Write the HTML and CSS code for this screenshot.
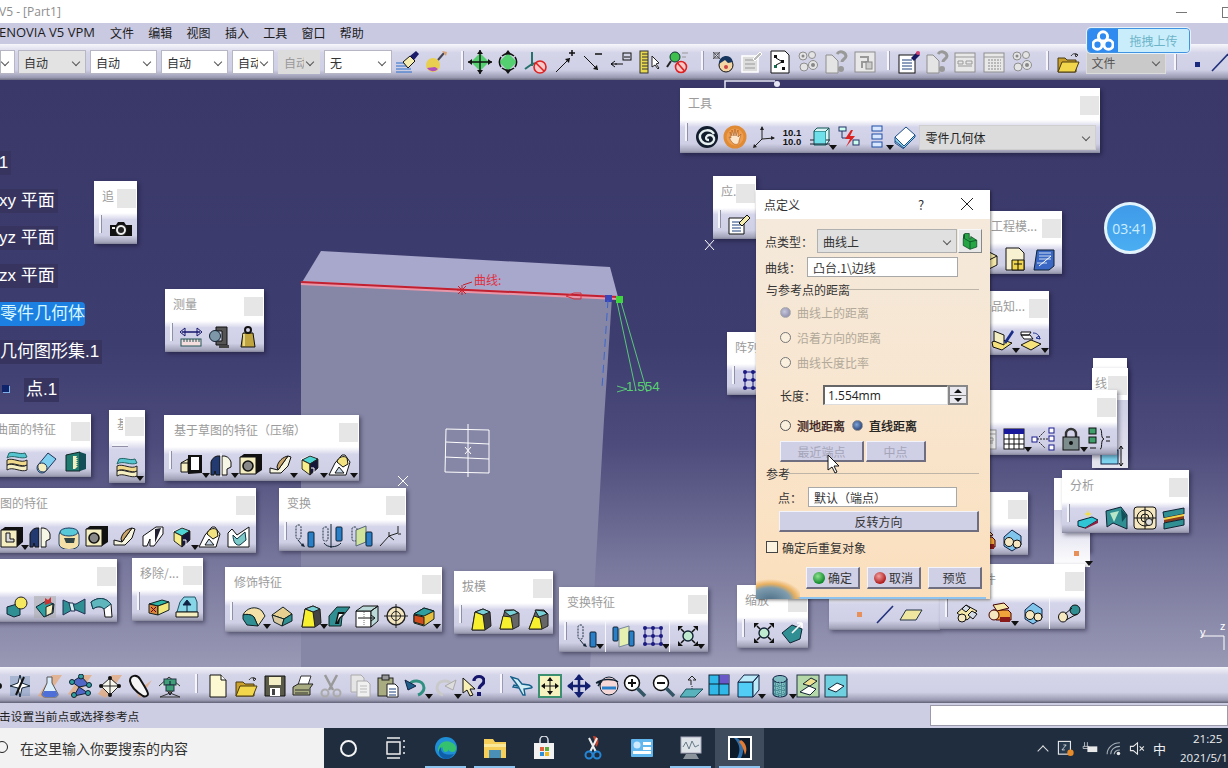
FILE: index.html
```html
<!DOCTYPE html>
<html lang="zh">
<head>
<meta charset="utf-8">
<title>CATIA V5 - [Part1]</title>
<link rel="stylesheet" href="styles.css">
</head>
<body>
<svg class="sprite" xmlns="http://www.w3.org/2000/svg">
<defs>
<symbol id="brush" viewBox="0 0 24 24"><path d="M0 13h13M0 16h14M0 19h15M0 22h16" stroke="#2a6fc9" fill="none"/><path d="M7 12l7-6 5 5-7 7z" fill="#f5ecb0" stroke="#111"/><path d="M14 6l6-5 3 3-5 6z" fill="#1b1b6b"/></symbol>
<symbol id="bulb" viewBox="0 0 24 24"><circle cx="9" cy="15" r="7" fill="#e8cf50"/><path d="M3 18a7 7 0 0 0 11 1l-3-2z" fill="#b050c0"/><path d="M14 10l6-7" stroke="#445" stroke-width="2"/><path d="M18 1l5 1-1 4z" fill="#d9a070"/></symbol>
<symbol id="fit" viewBox="0 0 24 24"><path d="M12 3l9 9-9 9-9-9z" fill="#55d070"/><path d="M12 0v24M0 12h24" stroke="#111" stroke-width="1.4"/><path d="M12 0l-3 4h6zM12 24l-3-4h6zM0 12l4-3v6zM24 12l-4-3v6z" fill="#111"/></symbol>
<symbol id="rot" viewBox="0 0 24 24"><path d="M12 3l9 9-9 9-9-9z" fill="#55d070"/><path d="M6 6a9 9 0 0 1 12 0M18 18a9 9 0 0 1-12 0M5 7a9 9 0 0 0 0 10M19 7a9 9 0 0 1 0 10" stroke="#111" stroke-width="1.5" fill="none"/><path d="M12 0l-3 4h6zM12 24l-3-4h6z" fill="#111"/></symbol>
<symbol id="noaxis" viewBox="0 0 24 24"><path d="M8 2v14M8 14l-7 5M8 14l10-2" stroke="#26726a" stroke-width="2" fill="none"/><circle cx="16" cy="17" r="6" fill="#f7c9c9" stroke="#d22" stroke-width="1.6"/><path d="M12 13l8 8" stroke="#d22" stroke-width="1.6"/></symbol>
<symbol id="arrplus" viewBox="0 0 24 24"><path d="M3 22L17 8" stroke="#111"/><path d="M17 8l-5 1 4 4z" fill="#111"/><path d="M16 3h6M19 0v6" stroke="#111" stroke-width="1.5"/></symbol>
<symbol id="arrminus" viewBox="0 0 24 24"><path d="M3 6l14 14" stroke="#111"/><path d="M17 20l-5-1 4-4z" fill="#111"/><path d="M14 4h7" stroke="#111" stroke-width="1.5"/></symbol>
<symbol id="arrbox" viewBox="0 0 24 24"><path d="M2 14h12M2 14l4-3M2 14l4 3" stroke="#111" fill="none"/><path d="M2 14h2m2 0h2" stroke="#111"/><rect x="14" y="3" width="8" height="7" fill="none" stroke="#111"/><path d="M15 7h6" stroke="#111"/></symbol>
<symbol id="ruler" viewBox="0 0 24 24"><rect x="2" y="1" width="8" height="22" fill="#e9d94c" stroke="#333"/><path d="M4 4h6M4 7h6M4 10h6M4 13h6M4 16h6M4 19h6" stroke="#333"/><path d="M14 6v11l3-2 3 4 1-1-3-4 3-1z" fill="#fff" stroke="#222"/></symbol>
<symbol id="keyno" viewBox="0 0 24 24"><circle cx="9" cy="7" r="5" fill="#3ebf4e" stroke="#133"/><path d="M5 11l-4 6" stroke="#222" stroke-width="2"/><circle cx="15" cy="17" r="5.5" fill="#f7c9c9" stroke="#d22" stroke-width="1.6"/><path d="M11.5 13l7 8" stroke="#d22" stroke-width="1.6"/><path d="M16 3h6M16 7h4" stroke="#999"/></symbol>
<symbol id="head" viewBox="0 0 24 24"><circle cx="15" cy="15" r="7" fill="#f4d7a5" stroke="#111"/><path d="M8 14a7 7 0 0 1 14-2l-5 1-3-3z" fill="#17365f"/><circle cx="15" cy="17" r="2" fill="#c44"/><path d="M2 2l7 7M9 2L2 9" stroke="#555"/><rect x="3" y="3" width="5" height="5" fill="none" stroke="#555"/></symbol>
<symbol id="gdoc" viewBox="0 0 24 24"><path d="M3 6h16v16H3z" fill="#ddd" stroke="#fff" stroke-width="1.5"/><path d="M6 10h10M6 14h10M6 18h10" stroke="#999"/><path d="M14 9l7-7 2 2-7 7z" fill="#bbb" stroke="#fff"/></symbol>
<symbol id="docpen" viewBox="0 0 24 24"><path d="M1 6h15v16H1z" fill="#fff" stroke="#111"/><path d="M4 10h9M4 13h9M4 16h9M4 19h9" stroke="#1c3d7a"/><path d="M11 11l8-8 3 3-8 8z" fill="#f5ecb0" stroke="#111"/></symbol>
<symbol id="flow" viewBox="0 0 24 24"><path d="M3 1h14l4 4v18H3z" fill="#fff" stroke="#111"/><rect x="6" y="5" width="3" height="3" fill="#111"/><rect x="13" y="10" width="3" height="3" fill="#111"/><rect x="6" y="15" width="3" height="3" fill="#1a6b4f"/><rect x="14" y="17" width="3" height="3" fill="#111"/><path d="M8 8l5 3M8 15l6-3" stroke="#111"/></symbol>
<symbol id="ggear" viewBox="0 0 24 24"><g fill="#e4e4e4" stroke="#8e8e8e"><circle cx="7" cy="6" r="4"/><circle cx="16" cy="5" r="3.5"/><circle cx="8" cy="17" r="4"/><circle cx="17" cy="15" r="4.5"/></g><circle cx="7" cy="6" r="1.5" fill="#888"/><circle cx="17" cy="15" r="2" fill="#888"/></symbol>
<symbol id="gcheck" viewBox="0 0 24 24"><path d="M2 5h6l6 6v12H2z" fill="#e4e4e4" stroke="#8e8e8e"/><path d="M13 4a5 5 0 0 1 9 2c0 3-4 3-4 6" fill="none" stroke="#999" stroke-width="3"/><circle cx="17" cy="19" r="3" fill="#999"/></symbol>
<symbol id="gform" viewBox="0 0 24 24"><rect x="2" y="2" width="20" height="20" fill="#e8e8e8" stroke="#8e8e8e"/><path d="M7 7h8v5H9v6" fill="none" stroke="#999" stroke-width="2"/><rect x="13" y="12" width="6" height="7" fill="#ccc" stroke="#888"/></symbol>
<symbol id="gtab" viewBox="0 0 24 24"><rect x="2" y="3" width="20" height="19" fill="#e8e8e8" stroke="#8e8e8e"/><path d="M2 7h20M5 11h5v3H5zM13 11h6v3h-6zM5 16h14" stroke="#999" fill="none"/></symbol>
<symbol id="gdots" viewBox="0 0 24 24"><rect x="2" y="3" width="20" height="19" fill="#e8e8e8" stroke="#8e8e8e"/><path d="M2 7h20" stroke="#999"/><path d="M6 10h13M6 13h13M6 16h13M6 19h13" stroke="#888" stroke-dasharray="2 1"/></symbol>
<symbol id="doclist" viewBox="0 0 24 24"><rect x="2" y="5" width="16" height="18" fill="#fff" stroke="#111"/><path d="M5 10h10M5 13h10M5 16h10M5 19h10" stroke="#1c3d7a"/><path d="M14 8l6-6 3 3-6 6z" fill="#17175f"/><circle cx="21" cy="3" r="2" fill="#d04070"/></symbol>
<symbol id="folder" viewBox="0 0 24 24"><path d="M2 8h7l2 2h9v12H2z" fill="#c9a12c" stroke="#4a3a10"/><path d="M2 22l4-10h17l-4 10z" fill="#f2d64c" stroke="#4a3a10"/><path d="M15 6c2-3 5-3 7-1M22 5l-3-1 1 3z" stroke="#333" fill="none"/></symbol>
<symbol id="spiral" viewBox="0 0 24 24"><circle cx="12" cy="12" r="11" fill="#111c2c"/><path d="M19 9a8 8 0 0 0-14 1c-1 5 3 9 8 9 4 0 7-3 6-6-1-3-5-4-7-2s-1 4 2 4" fill="none" stroke="#e6f0f0" stroke-width="2.4"/></symbol>
<symbol id="hand" viewBox="0 0 24 24"><circle cx="12" cy="12" r="11.5" fill="#e08a33"/><circle cx="12" cy="12" r="8.5" fill="#ed9d4d"/><path d="M11 19c-3-2-4-5-5-7l2 1-1-6 2 4V5l2 6 1-7 1 7 2-6v7l3-3-2 7c0 3-2 4-5 3z" fill="#fbe6cc" stroke="#a9591c" stroke-width=".6"/></symbol>
<symbol id="axes" viewBox="0 0 24 24"><path d="M10 14V2M10 14l12-1M10 14l-8 8" stroke="#222" fill="none"/><path d="M10 1l-2 4h4zM23 13l-4-2v4zM1 23l4-1-3-3z" fill="#222"/></symbol>
<symbol id="cubecy" viewBox="0 0 24 24"><path d="M6 6h12v14H6z" fill="#6fe0ea" stroke="#155"/><path d="M6 6l3-3h12l-3 3M18 6l3-3v13l-3 4" fill="#d7f3f3" stroke="#155"/><path d="M2 15h4M18 15h4M2 19h20" stroke="#223"/></symbol>
<symbol id="bolt" viewBox="0 0 24 24"><rect x="2" y="2" width="7" height="4" fill="#cfe" stroke="#236"/><rect x="16" y="15" width="6" height="5" fill="#cfe" stroke="#236"/><path d="M5 6v7M5 13h11" stroke="#236" fill="none"/><path d="M14 5l-6 9h5l-4 8 9-11h-5l3-6z" fill="#d22"/></symbol>
<symbol id="stack" viewBox="0 0 24 24"><rect x="7" y="1" width="10" height="5" fill="#d8e6ff" stroke="#1f4ea5"/><rect x="7" y="9" width="10" height="5" fill="#d8e6ff" stroke="#1f4ea5"/><rect x="7" y="17" width="10" height="5" fill="#d8e6ff" stroke="#1f4ea5"/></symbol>
<symbol id="book" viewBox="0 0 24 24"><path d="M2 12L13 2l9 8-11 11z" fill="#fff" stroke="#1b4f8a"/><path d="M2 12v4l9 7 11-11v-2L11 21z" fill="#8fd3e8" stroke="#1b4f8a"/><path d="M2 16v2l9 6" stroke="#1b4f8a" fill="none"/></symbol>
<symbol id="camera" viewBox="0 0 24 24"><path d="M1 8h6l2-3h6l2 3h6v11H1z" fill="#111"/><circle cx="12" cy="13" r="5.5" fill="#eee" stroke="#111"/><circle cx="12" cy="13" r="3" fill="#222"/><rect x="3" y="10" width="3" height="2" fill="#eee"/></symbol>
<symbol id="meas" viewBox="0 0 24 24"><path d="M3 7h18" stroke="#16166c" stroke-width="1.5"/><path d="M1 7l5-4v8zM23 7l-5-4v8z" fill="none" stroke="#16166c"/><rect x="2" y="14" width="20" height="7" fill="#f6dede" stroke="#255"/><path d="M5 14v3M8 14v3M11 14v3M14 14v3M17 14v3M20 14v3" stroke="#255"/></symbol>
<symbol id="scope" viewBox="0 0 24 24"><path d="M9 2h11v18H9v-4h6V6H9z" fill="#555" stroke="#111"/><circle cx="8" cy="11" r="5.5" fill="#7d97a8" stroke="#123"/><path d="M12 20h10v3H12z" fill="#444"/></symbol>
<symbol id="weight" viewBox="0 0 24 24"><path d="M7 8h10l2 14H5z" fill="#bfa43f" stroke="#111"/><circle cx="12" cy="5" r="3" fill="none" stroke="#111" stroke-width="2"/><path d="M8 9v12" stroke="#e5d78a" stroke-width="2"/></symbol>
<symbol id="layers" viewBox="0 0 24 24"><path d="M2 15c6-3 14 4 20 0v5c-6 3-14-4-20 0z" fill="#f5eec0" stroke="#222"/><path d="M2 10c6-3 14 4 20 0v5c-6 3-14-4-20 0z" fill="#f0d98a" stroke="#222"/><path d="M2 8c6-4 14 2 20-1l-2-4c-6 2-10-2-16 0z" fill="#55c5cf" stroke="#266"/></symbol>
<symbol id="pill" viewBox="0 0 24 24"><path d="M14 3l8 6-10 12a5 5 0 0 1-8-6z" fill="#7ecff0" stroke="#235"/><path d="M4 15a5 5 0 0 1 8 6c-3 2-9 1-8-6z" fill="#f5eec0" stroke="#235"/></symbol>
<symbol id="studs" viewBox="0 0 24 24"><path d="M2 5l14-3v19H2z" fill="#1f7a70" stroke="#122"/><path d="M16 2l6 2v15l-6 2z" fill="#144f58"/><path d="M9 6h4l-1 2h2l-2 2h2l-2 2h2l-2 2h2l-2 2h2l-3 3H9z" fill="#f5eec0"/></symbol>
<symbol id="pad" viewBox="0 0 24 24"><path d="M8 2h14v18l-14 1z" fill="#111"/><path d="M11 4h8v13h-8z" fill="#fff"/><path d="M1 10l7-4v13H1z" fill="#f5eec0" stroke="#111"/><path d="M1 10h7" stroke="#111"/></symbol>
<symbol id="shaft" viewBox="0 0 24 24"><path d="M2 22V9a8 8 0 0 1 9-6v19H7l-1-4-1 4z" fill="#223a6f" stroke="#111"/><path d="M13 22V3a8 8 0 0 1 9 6v5l-4 2v6z" fill="#f7f7e5" stroke="#111"/><path d="M12 0v24" stroke="#fff"/></symbol>
<symbol id="hole" viewBox="0 0 24 24"><path d="M1 4h16v17H1z" fill="#f5eec0" stroke="#111"/><path d="M1 4l4-3h18l-6 3zM17 4l6-3v16l-6 4z" fill="#111"/><circle cx="9" cy="13" r="5" fill="#888" stroke="#111" stroke-width="1.6"/></symbol>
<symbol id="rib" viewBox="0 0 24 24"><path d="M1 20v-5l8 2 10-14 3 1-3 9-7 7z" fill="#f5f5e0" stroke="#111"/><path d="M8 14c1-6 6-10 11-11l-10 14z" fill="#c9a56a" stroke="#111"/></symbol>
<symbol id="sweep" viewBox="0 0 24 24"><path d="M1 21V11L14 2h7v7L12 21H8V14L5 21z" fill="#fff" stroke="#111"/><path d="M13 4l6-1-6 15z" fill="#223"/></symbol>
<symbol id="multi" viewBox="0 0 24 24"><path d="M12 2l9 4v9l-9 7-9-6V6z" fill="#fff"/><path d="M4 7l8-4 8 3-8 5z" fill="#4fd4d4" stroke="#222"/><path d="M4 7v9l8 6V11z" fill="#f7ee8a" stroke="#222"/><path d="M12 11l8-5v9l-8 7z" fill="#16163a" stroke="#222"/><path d="M13 15h3v5" stroke="#fff" fill="none"/></symbol>
<symbol id="loft" viewBox="0 0 24 24"><path d="M1 22l6-12L14 2h3l5 7-4 13z" fill="#fff" stroke="#111"/><path d="M9 9c1-5 7-7 10-4l1 6-5 3z" fill="#f2e380" stroke="#111"/><path d="M7 20l4-6 5 6z" fill="#c9d9ea" stroke="#111"/></symbol>
<symbol id="pocketS" viewBox="0 0 24 24"><path d="M1 22V8l4-4 5 6 12-8v20z" fill="#fff" stroke="#111"/><path d="M6 10l4 4 8-7 1 8-6 5c-4 1-7-3-7-10z" fill="#7cc9c9" stroke="#134"/></symbol>
<symbol id="groove" viewBox="0 0 24 24"><path d="M2 10a9 6 0 0 1 20 0v9a9 5 0 0 1-20 0z" fill="#f5e1a8" stroke="#246"/><ellipse cx="12" cy="7" rx="9" ry="4" fill="#58c9d9" stroke="#246"/><path d="M7 13h11l-1 5H9z" fill="#344"/></symbol>
<symbol id="lshape" viewBox="0 0 24 24"><path d="M1 5h16v17H1z" fill="#f5eec0" stroke="#111"/><path d="M1 5l4-3h18l-6 3zM17 5l6-3v15l-6 5z" fill="#111"/><path d="M6 8h4v6h4v3H6z" fill="#ddd" stroke="#111"/></symbol>
<symbol id="blob" viewBox="0 0 24 24"><path d="M2 12l10-3 3 4v7l-6 2-7-3z" fill="#2f8f92" stroke="#123"/><circle cx="16" cy="8" r="6" fill="#f5e760" stroke="#222"/></symbol>
<symbol id="house" viewBox="0 0 24 24"><rect x="1" y="1" width="22" height="22" fill="#aaa" opacity=".55"/><path d="M3 12l10-6 8 3-1 9-9 4z" fill="#2f9f9f" stroke="#123"/><path d="M12 3l3 2 3-3v6l-6 2z" fill="#c33"/><path d="M13 12l7-3-1 9-6 3z" fill="#f5eec0" stroke="#222"/></symbol>
<symbol id="bow" viewBox="0 0 24 24"><path d="M1 5l9 4 4 0 9-5v15l-9-4h-4l-9 5z" fill="#2f8f92" stroke="#235"/><path d="M7 8h4l2 8h-4z" fill="#d6f0f0" stroke="#235"/></symbol>
<symbol id="curve3" viewBox="0 0 24 24"><path d="M1 7c7-5 14-5 20 2l1 13h-7l-1-8c-3-3-7-3-11 0z" fill="#fff" stroke="#111"/><path d="M1 7c7-5 14-5 20 2l-7 5c-3-3-7-3-11 0z" fill="#5fb6bd" stroke="#145"/></symbol>
<symbol id="remove" viewBox="0 0 24 24"><path d="M2 10l13-4 7 2-11 4z" fill="#2fb5a5" stroke="#122"/><path d="M2 10l9 2v9l-9-2z" fill="#d9853a" stroke="#122"/><path d="M11 12l11-4v8l-11 5z" fill="#f2e77a" stroke="#122"/><path d="M4 13l5 5M9 13l-5 5" stroke="#600"/></symbol>
<symbol id="up" viewBox="0 0 24 24"><path d="M5 8L9 3h11l2 5v10H2l3-10z" fill="#86d6e8" stroke="#256"/><path d="M12 19V7M12 6l-4 5h8z" fill="#124" stroke="#124"/><path d="M1 18h22v5H1z" fill="#f5eec0" stroke="#111"/></symbol>
<symbol id="tmove" viewBox="0 0 24 24"><rect x="3" y="1" width="5" height="14" rx="2" fill="none" stroke="#234" stroke-dasharray="2 1"/><rect x="15" y="8" width="6" height="15" rx="1" fill="#2a80c8" stroke="#123"/><path d="M5 16l5 6" stroke="#123"/><path d="M12 23l-4-1 2-3z" fill="#123"/></symbol>
<symbol id="trot" viewBox="0 0 24 24"><rect x="2" y="3" width="5" height="14" rx="2" fill="none" stroke="#234" stroke-dasharray="2 1"/><path d="M10 0v24" stroke="#123"/><rect x="15" y="3" width="6" height="14" rx="1" fill="#2a80c8" stroke="#123"/><path d="M3 19c3 5 13 5 17 0" fill="none" stroke="#123"/></symbol>
<symbol id="tsym" viewBox="0 0 24 24"><rect x="2" y="3" width="5" height="14" rx="2" fill="none" stroke="#234" stroke-dasharray="2 1"/><path d="M6 6l10-4v16L6 22z" fill="#cfe39a" stroke="#567"/><rect x="16" y="8" width="6" height="14" rx="1" fill="#2a80c8" stroke="#123"/></symbol>
<symbol id="taxis" viewBox="0 0 24 24"><path d="M11 12l9-3v-7M11 12l-9 10M11 12v-4" stroke="#222" fill="none"/><path d="M20 10h3M11 12l5 4" stroke="#222"/></symbol>
<symbol id="fillet" viewBox="0 0 24 24"><path d="M1 11C4 4 14 1 20 7l3 5-7 10-4-9C9 10 4 10 1 11z" fill="#f5e1a8" stroke="#122"/><path d="M1 11c3-1 8-1 11 2l4 9-11-1-4-6z" fill="#2f8f92" stroke="#122"/></symbol>
<symbol id="chamf" viewBox="0 0 24 24"><path d="M2 11L13 3l9 7-8 5z" fill="#e8d090" stroke="#122"/><path d="M2 11l12 4-2 7-8-4z" fill="#d9c9a0" stroke="#122"/><path d="M14 15l8-5v7l-10 5z" fill="#2f8f92" stroke="#122"/></symbol>
<symbol id="draft" viewBox="0 0 24 24"><path d="M6 5l8-3 7 3 1 14-6 4H3z" fill="#444" stroke="#222"/><path d="M6 5l8-3 7 3-7 3z" fill="#78cfd6" stroke="#222"/><path d="M6 5l8 3 2 15H3z" fill="#f6f02e" stroke="#222"/></symbol>
<symbol id="draft2" viewBox="0 0 24 24"><path d="M8 3h9l5 3v13l-6 3H3z" fill="#666" stroke="#222"/><path d="M7 4l10-1 4 3-8 3z" fill="#78cfd6" stroke="#222"/><path d="M6 9l8 1 2 12H3z" fill="#f6f02e" stroke="#222"/></symbol>
<symbol id="draft3" viewBox="0 0 24 24"><path d="M10 3h8l4 4v12l-6 3H3z" fill="#666" stroke="#222"/><path d="M9 3l9 1 3 3-8 3z" fill="#78cfd6" stroke="#222"/><path d="M8 9l6 2 2 11H3z" fill="#f6f02e" stroke="#222"/></symbol>
<symbol id="shell" viewBox="0 0 24 24"><path d="M2 12l8-9h13l-8 10-1 9H2z" fill="#2f8f92" stroke="#122"/><path d="M8 20l3-12h7l-5 7-1 5z" fill="#111"/><path d="M10 18l2-8h4l-4 4z" fill="#fff"/></symbol>
<symbol id="thick" viewBox="0 0 24 24"><path d="M1 7h15v16H1z" fill="#fff" stroke="#111"/><path d="M1 7l7-5h15l-7 5zM16 7l7-5v15l-7 6z" fill="#bcd9d9" stroke="#111"/><path d="M3 14h16M16 11l4 3-4 3" stroke="#111" fill="none"/><path d="M9 8v14" stroke="#777" stroke-dasharray="1 1"/></symbol>
<symbol id="target" viewBox="0 0 24 24"><circle cx="12" cy="12" r="9" fill="#f5e7c0" stroke="#222" stroke-width="1.4"/><circle cx="12" cy="12" r="4.5" fill="none" stroke="#222"/><path d="M12 0v24M0 12h24" stroke="#222"/></symbol>
<symbol id="boxb" viewBox="0 0 24 24"><path d="M2 10l10-6 10 3v8l-10 7-10-3z" fill="#e8c040" stroke="#122"/><path d="M2 10l10-6 10 3-10 5z" fill="#2f9f9f" stroke="#122"/><path d="M2 11l10 2v8l-10-3z" fill="#d24b1a" stroke="#122"/></symbol>
<symbol id="grid" viewBox="0 0 24 24"><path d="M4 4h16v16H4zM4 12h16M12 4v16" fill="none" stroke="#1a1a80"/><g fill="#1a1a80"><circle cx="4" cy="4" r="2"/><circle cx="12" cy="4" r="2"/><circle cx="20" cy="4" r="2"/><circle cx="4" cy="12" r="2"/><circle cx="12" cy="12" r="2"/><circle cx="20" cy="12" r="2"/><circle cx="4" cy="20" r="2"/><circle cx="12" cy="20" r="2"/><circle cx="20" cy="20" r="2"/></g></symbol>
<symbol id="mirror" viewBox="0 0 24 24"><path d="M7 5l10-3v18L7 23z" fill="#e6f0b0" stroke="#789"/><rect x="1" y="3" width="5" height="14" rx="1" fill="#2a80c8" stroke="#123"/><rect x="17" y="7" width="5" height="15" rx="1" fill="#2a80c8" stroke="#123"/></symbol>
<symbol id="scaleI" viewBox="0 0 24 24"><circle cx="12" cy="12" r="5" fill="#bfeacf" stroke="#123" stroke-width="1.4"/><path d="M5 5l3 3M19 5l-3 3M5 19l3-3M19 19l-3-3" stroke="#111" stroke-width="1.500"/><path d="M2 2h5L2 7zM22 2h-5l5 5zM2 22h5l-5-5zM22 22h-5l5-5z" fill="#111"/></symbol>
<symbol id="scale2" viewBox="0 0 24 24"><path d="M2 12l10-8 10 4-2 10-10 4z" fill="#2f8f92" stroke="#123"/><path d="M12 12L22 2M22 2h-5M22 2v5" stroke="#fff" stroke-width="1.6"/></symbol>
<symbol id="docy" viewBox="0 0 24 24"><path d="M3 1h13l5 5v17H3z" fill="#f7f1d2" stroke="#111"/><path d="M9 13h12v10H9z" fill="#f2d64c" stroke="#111"/><path d="M11 17h8M15 13v10" stroke="#111"/></symbol>
<symbol id="docb" viewBox="0 0 24 24"><path d="M5 3h17v16L17 23H2z" fill="#3a66c4" stroke="#123"/><path d="M7 6h12M7 9h12M7 12h12M5 16h10" stroke="#cde"/><path d="M7 19l12-10" stroke="#fff"/></symbol>
<symbol id="boxc" viewBox="0 0 24 24"><path d="M2 9l10-5 10 5v9l-10 5-10-5z" fill="#f3e6a8" stroke="#111"/><path d="M2 9l10 5 10-5M12 14v9" fill="none" stroke="#111"/></symbol>
<symbol id="know" viewBox="0 0 24 24"><path d="M1 14l8-3 12 4-10 7-9-3z" fill="#f5e27a" stroke="#111"/><path d="M3 13V3l10 4v10z" fill="#f5eec0" stroke="#111"/><path d="M13 14L21 2l2 2-8 12z" fill="#1b2f8a"/></symbol>
<symbol id="know2" viewBox="0 0 24 24"><path d="M2 7h8l2-3H2z M2 7l3 4h9l-3-4z" fill="#fff" stroke="#111"/><path d="M14 5c4 0 6 2 7 6M21 11l-4-1 3-2z" stroke="#1b2f8a" fill="none"/><path d="M2 17l10-5 10 4-10 6z" fill="#f5e27a" stroke="#111"/></symbol>
<symbol id="table" viewBox="0 0 24 24"><rect x="2" y="2" width="20" height="20" fill="#fff" stroke="#111"/><rect x="2" y="2" width="20" height="5" fill="#18189a"/><path d="M2 12h20M2 17h20M7 7v15M12 7v15M17 7v15" stroke="#111"/></symbol>
<symbol id="graph" viewBox="0 0 24 24"><g fill="#fff" stroke="#1a1a90"><rect x="1" y="10" width="5" height="5"/><rect x="18" y="1" width="5" height="5"/><rect x="18" y="9" width="5" height="5"/><rect x="18" y="18" width="5" height="5"/></g><path d="M6 12h12M8 10l6-6M8 15l6 6" stroke="#222" stroke-dasharray="2 1"/></symbol>
<symbol id="lock" viewBox="0 0 24 24"><path d="M7 10V7a5 5 0 0 1 10 0v3" fill="none" stroke="#333" stroke-width="2.4"/><rect x="4" y="10" width="16" height="13" fill="#7d8d8d" stroke="#111"/><circle cx="12" cy="16" r="2" fill="#111"/></symbol>
<symbol id="rules" viewBox="0 0 24 24"><rect x="2" y="1" width="7" height="6" fill="#3e9f6a" stroke="#111"/><rect x="2" y="10" width="7" height="6" fill="#3e9f6a" stroke="#111"/><path d="M3 21h6M13 2c3 0 0 9 4 10-4 1-1 10-4 10M19 10h4M19 14h4" stroke="#111" fill="none"/></symbol>
<symbol id="an1" viewBox="0 0 24 24"><path d="M2 15l14-4 6 3-13 8-7-2z" fill="#2fc5d5" stroke="#123"/><path d="M9 22l13-8v3L9 23z" fill="#8d2040"/><path d="M12 4l1 3 3 1-3 1-1 3-1-3-3-1 3-1z" fill="#f2df45"/></symbol>
<symbol id="an2" viewBox="0 0 24 24"><path d="M1 5l15-4 6 8v14L8 17 2 21z" fill="#2f8f92" stroke="#123"/><path d="M5 7l9-2-5 11z" fill="#b8e6c8"/><path d="M16 3l6 7-5 6z" fill="#124f58"/></symbol>
<symbol id="an3" viewBox="0 0 24 24"><rect x="1" y="1" width="22" height="22" rx="3" fill="#f5e7c0" stroke="#111"/><circle cx="12" cy="12" r="8" fill="none" stroke="#111"/><circle cx="12" cy="12" r="4" fill="none" stroke="#111"/><path d="M12 1v22M1 12h22" stroke="#111"/><circle cx="16" cy="16" r="3.5" fill="#ddd" stroke="#111"/></symbol>
<symbol id="an4" viewBox="0 0 24 24"><path d="M1 6l21-4v6L2 12z" fill="#2f8f92" stroke="#123"/><path d="M2 12l20-4v5L2 17z" fill="#8a3b1a"/><path d="M2 12l20-4v2L2 14z" fill="#f2d64c"/><path d="M2 17l20-4v6L2 23z" fill="#2f8f92" stroke="#123"/></symbol>
<symbol id="asm1" viewBox="0 0 24 24"><path d="M2 12l9-8 11 6-10 9z" fill="#f5e7a8" stroke="#111"/><path d="M7 8l4-4 4 3-4 4zM13 14l4-4 5 3-4 5z" fill="#d3dbe8" stroke="#111"/><circle cx="7" cy="17" r="4" fill="#f5e7c0" stroke="#111"/></symbol>
<symbol id="asm2" viewBox="0 0 24 24"><path d="M5 9h15l3 3v7H8z" fill="#f0a33a" stroke="#400"/><path d="M5 4l11-2 5 5-12 3z" fill="#f5e7a8" stroke="#400"/><circle cx="6" cy="14" r="5" fill="#f5e7c0" stroke="#400"/><path d="M12 16h10v5H12z" fill="#8a1a1a"/></symbol>
<symbol id="asm3" viewBox="0 0 24 24"><path d="M4 9l8-7 9 6v9l-9 6-8-5z" fill="#7fc5ec" stroke="#124"/><circle cx="9" cy="14" r="4.5" fill="#f5e7c0" stroke="#111"/><circle cx="17" cy="16" r="4" fill="#f5e7c0" stroke="#111"/></symbol>
<symbol id="asm4" viewBox="0 0 24 24"><ellipse cx="6" cy="16" rx="4.5" ry="5" fill="#f5e7c0" stroke="#111"/><ellipse cx="18" cy="9" rx="5" ry="5" fill="#2f8f92" stroke="#111"/><path d="M8 13l7-6M9 19l11-6" stroke="#111"/></symbol>
<symbol id="point" viewBox="0 0 24 24"><rect x="10" y="10" width="5" height="5" fill="#e8905a"/></symbol>
<symbol id="line" viewBox="0 0 24 24"><path d="M4 21L20 4" stroke="#20307a" stroke-width="1.6"/></symbol>
<symbol id="plane" viewBox="0 0 24 24"><path d="M7 8h16L17 18H1z" fill="#efe6a0" stroke="#234"/></symbol>
<symbol id="star" viewBox="0 0 24 24"><rect x="2" y="2" width="20" height="20" fill="#5a7fa8" opacity=".35"/><path d="M12 1l2 8 8 3-8 2-2 9-2-9-8-2 8-3z" fill="#fff" stroke="#123"/><path d="M16 3l-8 18" stroke="#111" stroke-width="2"/></symbol>
<symbol id="flask" viewBox="0 0 24 24"><path d="M0 22L14 1h10L8 24z" fill="#e4a878" opacity=".75"/><path d="M9 3h5v6l6 11c0 2-1 3-3 3H7c-2 0-3-1-3-3l5-11z" fill="#dbeefc" stroke="#555"/><path d="M6 17h12l2 4-3 2H7l-3-2z" fill="#4f6fd8"/></symbol>
<symbol id="net" viewBox="0 0 24 24"><path d="M0 20L14 1h10L8 24z" fill="#e4a878" opacity=".75"/><path d="M4 8l9-6 8 9-10 2zM11 13l-5 9 14-3z" fill="#5067c8" stroke="#123"/><g fill="#2f9f9f" stroke="#123"><circle cx="13" cy="2.500" r="2.500"/><circle cx="4" cy="8" r="2.500"/><circle cx="21" cy="11" r="2.500"/><circle cx="6" cy="21" r="2.500"/><circle cx="20" cy="19" r="2.500"/></g></symbol>
<symbol id="net2" viewBox="0 0 24 24"><path d="M0 20L14 1h10L8 24z" fill="#e4a878" opacity=".75"/><path d="M3 12l9-8 9 8-9 9zM3 12h18M12 4v17" fill="#f7f7ee" stroke="#222"/><g fill="#111"><circle cx="12" cy="4" r="2"/><circle cx="3" cy="12" r="2"/><circle cx="21" cy="12" r="2"/><circle cx="12" cy="21" r="2"/></g></symbol>
<symbol id="cone" viewBox="0 0 24 24"><path d="M24 6L12 24 8 18z" fill="#e4a878" opacity=".75"/><path d="M2 7C2 1 9 0 12 5c3 5 8 12 8 15 0 2-3 3-5 2C10 19 3 13 2 7z" fill="#f5f5f5" stroke="#111" stroke-width="2"/></symbol>
<symbol id="rocket" viewBox="0 0 24 24"><path d="M1 12l10-9 11 9" fill="#d5e9de" stroke="#333"/><rect x="6" y="5" width="12" height="6" fill="#3e9f78" stroke="#234"/><path d="M12 7v14M12 21l-3-5h6z" stroke="#113" fill="#d9d25a"/><rect x="8" y="11" width="8" height="6" fill="#3e9f78" stroke="#234"/><path d="M2 23l10-4 10 4z" fill="none" stroke="#333"/></symbol>
<symbol id="new" viewBox="0 0 24 24"><path d="M4 1h11l5 5v17H4z" fill="#fbf8d2" stroke="#111"/><path d="M15 1v5h5" fill="#fff" stroke="#111"/></symbol>
<symbol id="save" viewBox="0 0 24 24"><path d="M2 2h20v20H2z" fill="#5a5a4a" stroke="#111"/><rect x="6" y="3" width="12" height="8" fill="#f5efc5"/><rect x="7" y="14" width="10" height="8" fill="#fff"/><rect x="9" y="15" width="3" height="6" fill="#444"/></symbol>
<symbol id="print" viewBox="0 0 24 24"><path d="M7 11l3-9h10l-3 9z" fill="#fff" stroke="#333"/><path d="M2 13l5-3h15l-3 4v7H2z" fill="#a8ac80" stroke="#222"/><path d="M4 16h14M4 19h13" stroke="#333"/></symbol>
<symbol id="cut" viewBox="0 0 24 24"><path d="M6 1l8 15M18 1l-8 15" stroke="#999" stroke-width="2.500" fill="none"/><circle cx="6" cy="19" r="3.500" fill="none" stroke="#aaa" stroke-width="2"/><circle cx="18" cy="19" r="3.500" fill="none" stroke="#aaa" stroke-width="2"/></symbol>
<symbol id="copy" viewBox="0 0 24 24"><path d="M3 1h10l3 3v14H3z" fill="#e5e5e5" stroke="#aaa"/><path d="M9 7h10l3 3v13H9z" fill="#f0f0f0" stroke="#aaa"/><path d="M12 12h7M12 15h7M12 18h7" stroke="#bbb"/></symbol>
<symbol id="paste" viewBox="0 0 24 24"><rect x="2" y="4" width="15" height="18" fill="#a8ac80" stroke="#222"/><rect x="6" y="1" width="7" height="5" fill="#999" stroke="#222"/><path d="M11 10h8l3 3v10H11z" fill="#fff" stroke="#222"/><path d="M13 15h7M13 18h7M13 21h7" stroke="#1c3d7a"/></symbol>
<symbol id="undo" viewBox="0 0 24 24"><path d="M5 12c1-7 15-7 15 2 0 3-3 6-6 7" fill="none" stroke="#2f8f80" stroke-width="3"/><path d="M1 6l3 10 8-4z" fill="#1f5f8a" stroke="#124"/></symbol>
<symbol id="redo" viewBox="0 0 24 24"><path d="M19 12C18 5 4 5 4 14c0 3 3 6 6 7" fill="none" stroke="#c9c9c9" stroke-width="3"/><path d="M23 6l-3 10-8-4z" fill="#ddd" stroke="#aaa"/></symbol>
<symbol id="helpq" viewBox="0 0 24 24"><path d="M2 4v15l4-3 3 6 3-1-3-6h5z" fill="#f7efb3" stroke="#111"/><path d="M13 7c0-6 10-6 10 0 0 4-5 4-5 8" fill="none" stroke="#16166c" stroke-width="3.200"/><rect x="16" y="18" width="4" height="4" fill="#16166c"/></symbol>
<symbol id="fly" viewBox="0 0 24 24"><path d="M1 3l7 2 4 5 7 1c3 1 4 3 2 3l-7 1 1 6h-2l-4-7-6-1 1-2 4 1-3-4z" fill="#d2eef5" stroke="#145f8a" stroke-width="1.400"/></symbol>
<symbol id="fitbox" viewBox="0 0 24 24"><rect x="1" y="1" width="22" height="22" fill="#f6f3c0" stroke="#3c8f70" stroke-width="2"/><path d="M12 4v16M4 12h16" stroke="#111"/><path d="M12 3l-3 4h6zM12 21l-3-4h6zM3 12l4-3v6zM21 12l-4-3v6z" fill="#111"/></symbol>
<symbol id="panb" viewBox="0 0 24 24"><path d="M12 1v22M1 12h22" stroke="#13206f" stroke-width="2.500"/><path d="M12 0l-5 6h10zM12 24l-5-6h10zM0 12l6-5v10zM24 12l-6-5v10z" fill="#13206f"/></symbol>
<symbol id="rothead" viewBox="0 0 24 24"><circle cx="14" cy="12" r="9" fill="#f7d8d8" stroke="#123"/><path d="M1 9c5-4 17-5 22-1M1 9l5-1-3 4" fill="none" stroke="#123" stroke-width="1.500"/><path d="M7 14h14" stroke="#2a80c8" stroke-width="3"/></symbol>
<symbol id="zin" viewBox="0 0 24 24"><circle cx="9" cy="9" r="7.500" fill="#fff" stroke="#111" stroke-width="1.500"/><path d="M5 9h8M9 5v8" stroke="#111" stroke-width="2"/><path d="M14 14l8 8" stroke="#356" stroke-width="3.500"/></symbol>
<symbol id="zout" viewBox="0 0 24 24"><circle cx="9" cy="9" r="7.500" fill="#fff" stroke="#111" stroke-width="1.500"/><path d="M5 9h8" stroke="#111" stroke-width="2"/><path d="M14 14l8 8" stroke="#356" stroke-width="3.500"/></symbol>
<symbol id="normal" viewBox="0 0 24 24"><path d="M12 2l-4 4h3v5M12 2l4 4h-3" fill="none" stroke="#222"/><path d="M12 12v3" stroke="#222" stroke-dasharray="1 1"/><path d="M6 15h17l-8 8H0z" fill="#58b3bd" stroke="#1b4f5a"/></symbol>
<symbol id="views" viewBox="0 0 24 24"><rect x="1" y="1" width="20" height="20" fill="#2fb8e8" stroke="#123"/><rect x="11" y="1" width="10" height="9" fill="#6a58c8"/><path d="M11 1v20M1 10h20" stroke="#123"/></symbol>
<symbol id="cube" viewBox="0 0 24 24"><path d="M2 8h15v15H2z" fill="#52cdf5" stroke="#124"/><path d="M2 8l6-7h15l-6 7zM17 8l6-7v15l-6 7z" fill="#bdeaf8" stroke="#124"/></symbol>
<symbol id="cyl" viewBox="0 0 24 24"><path d="M5 5v15c0 4 14 4 14 0V5z" fill="#4f8f98" stroke="#124"/><ellipse cx="12" cy="5" rx="7" ry="3.500" fill="#7fbcc2" stroke="#124"/><path d="M6 10h12M6 14h12M6 18h12M9 7v15M12 8v15M15 7v15" stroke="#9fdfe0" stroke-dasharray="1 1"/></symbol>
<symbol id="sh1" viewBox="0 0 24 24"><rect x="1" y="1" width="22" height="22" fill="#b5d8a8" stroke="#234"/><path d="M4 18l9-6 7 3-6 6z" fill="#fff" stroke="#123"/><path d="M7 10l8-6 6 3-7 5z" fill="#efe090" stroke="#123"/></symbol>
<symbol id="sh2" viewBox="0 0 24 24"><rect x="1" y="1" width="22" height="22" fill="#6fd0e0" stroke="#234"/><path d="M4 15l9-6 7 3-8 6z" fill="#fff" stroke="#123"/></symbol>
<symbol id="ptg" viewBox="0 0 24 24"><path d="M4 12h14M4 12l3-3M4 12l3 3" stroke="#333" fill="none"/><circle cx="20" cy="12" r="3" fill="#111"/></symbol>
<symbol id="flatcy" viewBox="0 0 24 24"><rect x="1" y="6" width="17" height="14" fill="#7ed4ee" stroke="#124"/><path d="M21 2v20M19 5l2-3 2 3M19 19l2 3 2-3" stroke="#111" fill="none"/></symbol>
<symbol id="edge" viewBox="0 0 24 24"><circle cx="12" cy="12" r="11" fill="#1f8ed6"/><path d="M4 16C3 7 13 1 21 9c2 3 1 7-2 7-3 0-4-1-5-3 1 2-1 3-3 3-3-1-2-6-3-5z" fill="#35c26e"/><path d="M11 23C5 21 3 15 7 11c-1 6 5 9 13 7-2 3-5 5-9 5z" fill="#0f5fa8"/></symbol>
<symbol id="explorer" viewBox="0 0 24 24"><path d="M1 3h9l2 3h11v16H1z" fill="#f6cf5a"/><rect x="1" y="8" width="22" height="3" fill="#f9e79a"/><rect x="6" y="14" width="12" height="8" fill="#4a8fb8"/></symbol>
<symbol id="store" viewBox="0 0 24 24"><path d="M8 7V4a4 4 0 0 1 8 0v3" fill="none" stroke="#d8dde4" stroke-width="1.500"/><rect x="2" y="7" width="20" height="16" fill="#f2f2f2"/><rect x="8" y="11" width="4" height="4" fill="#e5613d"/><rect x="13" y="11" width="4" height="4" fill="#5fae3c"/><rect x="8" y="16" width="4" height="4" fill="#2d8fd8"/><rect x="13" y="16" width="4" height="4" fill="#f0ba1c"/></symbol>
<symbol id="sciss" viewBox="0 0 24 24"><path d="M12 0c6 0 7 7 3 11" fill="#c2412c"/><path d="M8 2l7 14M16 2L9 16" stroke="#eee" stroke-width="2"/><circle cx="8" cy="19" r="3.500" fill="none" stroke="#2486d6" stroke-width="2"/><circle cx="16" cy="19" r="3.500" fill="none" stroke="#2486d6" stroke-width="2"/></symbol>
<symbol id="appb" viewBox="0 0 24 24"><rect x="1" y="3" width="22" height="18" rx="1" fill="#62b7ef"/><circle cx="7" cy="9" r="3.500" fill="#cdeaff"/><rect x="13" y="6" width="8" height="3" fill="#fff"/><rect x="13" y="11" width="8" height="3" fill="#fff"/><rect x="3" y="15" width="18" height="3" fill="#fff"/></symbol>
<symbol id="monitor" viewBox="0 0 24 24"><rect x="2" y="1" width="20" height="16" fill="#dde3e8" stroke="#aab"/><path d="M4 11l3-5 3 7 3-8 3 6 4-2" fill="none" stroke="#6a7a8a"/><path d="M7 18h10l3 5H4z" fill="#8b949c"/></symbol>
<symbol id="catia" viewBox="0 0 24 24"><rect x="0" y="0" width="24" height="24" fill="#fff"/><rect x="2" y="2" width="20" height="20" fill="#0d1a2a"/><path d="M9 2c7 4 8 12 4 20h-4c4-7 3-14-3-20z" fill="#2f6ea8"/><path d="M13 4c5 3 7 9 4 15-1-5-3-10-6-13z" fill="#e27b33"/></symbol>
<symbol id="tlogo" viewBox="0 0 24 24"><circle cx="12" cy="7" r="5" fill="none" stroke="#fff" stroke-width="3.200"/><circle cx="6" cy="16" r="5" fill="none" stroke="#fff" stroke-width="3.200"/><circle cx="18" cy="16" r="5" fill="none" stroke="#fff" stroke-width="3.200"/></symbol>
<symbol id="trayshot" viewBox="0 0 24 24"><rect x="2" y="2" width="17" height="18" fill="#26384c" stroke="#e5e5e5" stroke-width="1.600"/><path d="M7 14l6-7M13 7h-4M7 14h4" stroke="#fff"/><circle cx="19" cy="18" r="4.500" fill="#e88b2a"/></symbol>
<symbol id="traypow" viewBox="0 0 24 24"><path d="M5 3v6M9 3v6M3 9h8v3H3z" stroke="#e8e8e8" fill="none"/><rect x="9" y="9" width="14" height="8" fill="#e8e8e8"/></symbol>
<symbol id="traywifi" viewBox="0 0 24 24"><path d="M3 20C3 11 11 4 21 4M8 20c0-6 5-11 13-11M13 20c0-3 3-6 8-6" fill="none" stroke="#a8b0b8" stroke-width="1.500"/><circle cx="19" cy="19" r="2.500" fill="#e8e8e8"/></symbol>
<symbol id="traysnd" viewBox="0 0 24 24"><path d="M2 9h4l6-5v16l-6-5H2z" fill="none" stroke="#e8e8e8" stroke-width="1.500"/><path d="M15 9l6 6M21 9l-6 6" stroke="#e8e8e8" stroke-width="1.500"/></symbol>
<symbol id="taskv" viewBox="0 0 24 24"><rect x="4" y="6" width="13" height="12" fill="none" stroke="#eee" stroke-width="1.500"/><path d="M4 2h13M4 22h13M20 5h2M20 11h2M20 17h2" stroke="#eee" stroke-width="1.500"/></symbol>
<symbol id="okg" viewBox="0 0 24 24"><path d="M5 2h6v7h2V6l8 5v9l-9 3-9-5V9z" fill="#26a545" stroke="#0a4a20"/><path d="M5 9l7 4 9-2M12 13v10" fill="none" stroke="#0a4a20"/><path d="M4 9V3" stroke="#0a4a20" stroke-width="2"/></symbol>
<symbol id="cursor" viewBox="0 0 14 20"><path d="M1 1v15l4-3 3 6 2-1-3-6h5z" fill="#fff" stroke="#111"/></symbol>
</defs>
</svg>

<div class="titlebar">
  <span class="title-text">V5 - [Part1]</span>
  <span class="win-btn win-min"></span>
  <span class="win-btn win-max"></span>
</div>
<div class="menubar">
  <span class="menu-item brand">ENOVIA V5 VPM</span>
  <span class="menu-item">文件</span>
  <span class="menu-item">编辑</span>
  <span class="menu-item">视图</span>
  <span class="menu-item">插入</span>
  <span class="menu-item">工具</span>
  <span class="menu-item">窗口</span>
  <span class="menu-item">帮助</span>
</div>
<div class="topbar">
  <span class="combo w-first"><b></b></span>
  <span class="combo w68 grey">自动<b></b></span>
  <span class="combo w68">自动<b></b></span>
  <span class="combo w68">自动<b></b></span>
  <span class="combo w44"><span class="cut">自动</span><b></b></span>
  <span class="combo w44 off"><span class="cut">自动</span><b></b></span>
  <span class="combo w68 none">无<b></b></span>
  <span class="tool first"><svg class="ic"><use href="#brush"/></svg></span>
  <span class="tool"><svg class="ic"><use href="#bulb"/></svg></span>
  <span class="sep s11"></span>
  <span class="tool"><svg class="ic"><use href="#fit"/></svg></span>
  <span class="tool"><svg class="ic"><use href="#rot"/></svg></span>
  <span class="tool"><svg class="ic"><use href="#noaxis"/></svg></span>
  <span class="tool"><svg class="ic"><use href="#arrplus"/></svg></span>
  <span class="tool"><svg class="ic"><use href="#arrminus"/></svg></span>
  <span class="tool"><svg class="ic"><use href="#arrbox"/></svg></span>
  <span class="tool"><svg class="ic"><use href="#ruler"/></svg></span>
  <span class="tool"><svg class="ic"><use href="#keyno"/></svg></span>
  <span class="sep s9"></span>
  <span class="tool"><svg class="ic"><use href="#head"/></svg></span>
  <span class="tool"><svg class="ic"><use href="#gdoc"/></svg></span>
  <span class="tool"><svg class="ic"><use href="#flow"/></svg></span>
  <span class="tool"><svg class="ic"><use href="#ggear"/></svg></span>
  <span class="tool"><svg class="ic"><use href="#gcheck"/></svg></span>
  <span class="tool"><svg class="ic"><use href="#gform"/></svg></span>
  <span class="sep s8"></span>
  <span class="tool"><svg class="ic"><use href="#doclist"/></svg></span>
  <span class="tool"><svg class="ic"><use href="#gcheck"/></svg></span>
  <span class="tool"><svg class="ic"><use href="#gtab"/></svg></span>
  <span class="tool"><svg class="ic"><use href="#gdots"/></svg></span>
  <span class="tool"><svg class="ic"><use href="#ggear"/></svg></span>
  <span class="sep s10"></span>
  <span class="tool"><svg class="ic"><use href="#folder"/></svg></span>
  <span class="combo w80 off flat">文件<b></b></span>
  <span class="sep s8"></span>
  <span class="dot"></span>
  <span class="tool-curve"><svg class="ic"><use href="#line"/></svg></span>
</div>

<main class="viewport"></main>

<div class="bottombar">
  <span class="tool lead"><svg class="ic"><use href="#ptg"/></svg></span>
  <span class="tool w30"><svg class="ic"><use href="#star"/></svg></span>
  <span class="tool w30"><svg class="ic"><use href="#flask"/></svg></span>
  <span class="tool w30"><svg class="ic"><use href="#net"/></svg></span>
  <span class="tool w30"><svg class="ic"><use href="#net2"/></svg></span>
  <span class="tool w30"><svg class="ic"><use href="#cone"/></svg></span>
  <span class="tool w30"><svg class="ic"><use href="#rocket"/></svg></span>
  <span class="sep s10b"></span>
  <span class="tool"><svg class="ic"><use href="#new"/></svg></span>
  <span class="tool"><svg class="ic"><use href="#folder"/></svg></span>
  <span class="tool"><svg class="ic"><use href="#save"/></svg></span>
  <span class="tool"><svg class="ic"><use href="#print"/></svg></span>
  <span class="tool"><svg class="ic"><use href="#cut"/></svg></span>
  <span class="tool"><svg class="ic"><use href="#copy"/></svg></span>
  <span class="tool"><svg class="ic"><use href="#paste"/></svg></span>
  <span class="tool drop"><svg class="ic"><use href="#undo"/></svg></span>
  <span class="tool drop"><svg class="ic"><use href="#redo"/></svg></span>
  <span class="tool"><svg class="ic"><use href="#helpq"/></svg></span>
  <span class="sep s12"></span>
  <span class="tool"><svg class="ic"><use href="#fly"/></svg></span>
  <span class="tool"><svg class="ic"><use href="#fitbox"/></svg></span>
  <span class="tool"><svg class="ic"><use href="#panb"/></svg></span>
  <span class="tool"><svg class="ic"><use href="#rothead"/></svg></span>
  <span class="tool"><svg class="ic"><use href="#zin"/></svg></span>
  <span class="tool"><svg class="ic"><use href="#zout"/></svg></span>
  <span class="tool"><svg class="ic"><use href="#normal"/></svg></span>
  <span class="tool"><svg class="ic"><use href="#views"/></svg></span>
  <span class="tool drop"><svg class="ic"><use href="#cube"/></svg></span>
  <span class="tool drop bump"><svg class="ic"><use href="#cyl"/></svg></span>
  <span class="tool"><svg class="ic"><use href="#sh1"/></svg></span>
  <span class="tool"><svg class="ic"><use href="#sh2"/></svg></span>
</div>
<div class="statusbar">
  <span class="status-text">击设置当前点或选择参考点</span>
  <span class="status-input"></span>
</div>
<footer class="taskbar">
  <div class="search"><span class="search-ring"></span><span>在这里输入你要搜索的内容</span></div>
  <div class="task-icons">
    <span class="cortana"></span>
    <span class="task tv"><svg class="ic"><use href="#taskv"/></svg></span>
    <span class="task on"><svg class="ic"><use href="#edge"/></svg></span>
    <span class="task on"><svg class="ic"><use href="#explorer"/></svg></span>
    <span class="task"><svg class="ic"><use href="#store"/></svg></span>
    <span class="task"><svg class="ic"><use href="#sciss"/></svg></span>
    <span class="task"><svg class="ic"><use href="#appb"/></svg></span>
    <span class="task on"><svg class="ic"><use href="#monitor"/></svg></span>
    <span class="task on active"><svg class="ic"><use href="#catia"/></svg></span>
  </div>
  <div class="tray">
    <span class="caret"></span>
    <svg class="tray-ic"><use href="#trayshot"/></svg>
    <svg class="tray-ic"><use href="#traypow"/></svg>
    <svg class="tray-ic"><use href="#traywifi"/></svg>
    <svg class="tray-ic"><use href="#traysnd"/></svg>
    <span class="ime">中</span>
    <span class="clock"><span>21:25</span><span>2021/5/1</span></span>
  </div>
</footer>

<div class="canvas">
  <svg class="scene" viewBox="0 0 1228 768">
    <path d="M301 284L321 251 610 267 618 297Z" fill="#a8a7cc"/>
    <path d="M301 284L612 297 604 420 590 667H301Z" fill="#8686a6"/>
    <path d="M301 283L618 298" stroke="#e896a8" stroke-width="4"/>
    <path d="M301 282L618 297" stroke="#c02030" stroke-width="2"/>
    <path d="M458 286l8 8M466 286l-8 8M462 285v10M457 290h10" stroke="#c8202c"/>
    <path d="M463 285l9-3" stroke="#c8202c"/>
    <path d="M566 296l8-3h7v6h-7z" fill="none" stroke="#d8303c"/>
    <rect x="605" y="295" width="7" height="7" fill="#3a46b8"/>
    <rect x="616" y="296" width="7" height="7" fill="#3ed43e"/>
    <path d="M608 300L602 388" stroke="#3a66d0" stroke-dasharray="8 5" fill="none"/>
    <path d="M617 302L636 391M621 302L647 392" stroke="#58c878" fill="none"/>
    <path d="M617 386l10 3-10 3" stroke="#58c878" fill="none"/>
    <text class="scene-green" x="626" y="391">1.554</text>
    <text class="scene-red" x="474" y="285">曲线:</text>
    <path d="M446 429l43 1v43l-44-1zM446 442l43 2M445 457l44 2M468 424v53" stroke="#fff" fill="none"/>
    <path d="M465 447l6 7M471 447l-6 7" stroke="#fff"/>
    <path d="M705 240l9 10M714 240l-9 10M398 476l10 10M408 476l-10 10" stroke="#fff"/>
    <path d="M725 88V81H775" stroke="#e6e6f4" fill="none" stroke-width="1.500"/>
    <circle cx="777" cy="84" r="3" fill="#e6e6f4"/>
    <path d="M1210 636h14M1210 636l-9 0M1224 636v14" stroke="#fff" fill="none"/>
    <text class="scene-axis" x="1200" y="636">y</text>
    <text class="scene-axis" x="1220" y="630">z</text>
  </svg>

  <div class="tree">
    <span class="node n1">t1</span>
    <span class="node n2">xy 平面</span>
    <span class="node n3">yz 平面</span>
    <span class="node n4">zx 平面</span>
    <span class="node n5 sel">零件几何体</span>
    <span class="node n6">几何图形集.1</span>
    <span class="node-bullet"></span>
    <span class="node n7">点.1</span>
  </div>

  <section class="pal p-tools"><div class="ptitle"><span>工具</span><i></i></div><div class="pbar"><u></u>
    <span class="tool"><svg class="ic"><use href="#spiral"/></svg></span>
    <span class="tool"><svg class="ic"><use href="#hand"/></svg></span>
    <span class="tool"><svg class="ic"><use href="#axes"/></svg></span>
    <span class="tool num-ic">10.1<br>10.0</span>
    <span class="tool drop"><svg class="ic"><use href="#cubecy"/></svg></span>
    <span class="tool"><svg class="ic"><use href="#bolt"/></svg></span>
    <span class="tool drop"><svg class="ic"><use href="#stack"/></svg></span>
    <span class="tool"><svg class="ic"><use href="#book"/></svg></span>
    <span class="combo body-combo">零件几何体<b></b></span>
  </div></section>

  <section class="pal p-cam"><div class="ptitle"><span>追</span><i></i></div><div class="pbar"><u></u><span class="tool"><svg class="ic"><use href="#camera"/></svg></span></div></section>
  <section class="pal p-meas"><div class="ptitle"><span>测量</span><i></i></div><div class="pbar"><u></u>
    <span class="tool"><svg class="ic"><use href="#meas"/></svg></span><span class="tool"><svg class="ic"><use href="#scope"/></svg></span><span class="tool"><svg class="ic"><use href="#weight"/></svg></span></div></section>
  <section class="pal p-app"><div class="ptitle"><span>应.</span><i></i></div><div class="pbar"><u></u><span class="tool"><svg class="ic"><use href="#docpen"/></svg></span></div></section>
  <section class="pal p-array"><div class="ptitle"><span>阵列</span></div><div class="pbar"><u></u><span class="tool"><svg class="ic"><use href="#grid"/></svg></span></div></section>

  <section class="pal p-eng"><div class="ptitle"><span>工程模...</span><i></i></div><div class="pbar"><u></u>
    <span class="tool"><svg class="ic"><use href="#boxc"/></svg></span><span class="tool"><svg class="ic"><use href="#docy"/></svg></span><span class="tool"><svg class="ic"><use href="#docb"/></svg></span></div></section>
  <section class="pal p-know"><div class="ptitle"><span>产品知...</span><i></i></div><div class="pbar"><u></u>
    <span class="tool drop"><svg class="ic"><use href="#know"/></svg></span><span class="tool drop"><svg class="ic"><use href="#know2"/></svg></span></div></section>

  <section class="pal p-stack1"><div class="ptitle"></div><div class="pbar"></div></section>
  <section class="pal p-stack2"><div class="ptitle"><span>线</span><i></i></div><div class="pbar stack-foot"><svg class="ic-foot"><use href="#flatcy"/></svg></div></section>
  <section class="pal p-rel"><div class="ptitle"><i></i></div><div class="pbar"><u></u>
    <span class="tool"><svg class="ic"><use href="#gtab"/></svg></span>
    <span class="tool drop"><svg class="ic"><use href="#table"/></svg></span><span class="tool"><svg class="ic"><use href="#graph"/></svg></span><span class="tool drop"><svg class="ic"><use href="#lock"/></svg></span><span class="tool"><svg class="ic"><use href="#rules"/></svg></span></div></section>
  <section class="pal p-asm3"><div class="ptitle"><i></i></div><div class="pbar"><u></u>
    <span class="tool"><svg class="ic"><use href="#asm2"/></svg></span><span class="tool"><svg class="ic"><use href="#asm3"/></svg></span></div></section>
  <section class="pal p-wire"><div class="ptitle"></div><div class="pbar"><span class="tool drop"><svg class="ic"><use href="#point"/></svg></span></div></section>
  <section class="pal p-analysis"><div class="ptitle"><span>分析</span><i></i></div><div class="pbar"><u></u>
    <span class="tool"><svg class="ic"><use href="#an1"/></svg></span><span class="tool"><svg class="ic"><use href="#an2"/></svg></span><span class="tool"><svg class="ic"><use href="#an3"/></svg></span><span class="tool"><svg class="ic"><use href="#an4"/></svg></span></div></section>

  <section class="pal p-surf"><div class="ptitle"><span>曲面的特征</span><i></i></div><div class="pbar"><u></u>
    <span class="tool"><svg class="ic"><use href="#layers"/></svg></span><span class="tool"><svg class="ic"><use href="#pill"/></svg></span><span class="tool"><svg class="ic"><use href="#studs"/></svg></span></div></section>
  <section class="pal p-base"><div class="ptitle"><span>基</span><i></i></div><div class="pbar pbar-h"><s></s><span class="tool drop"><svg class="ic"><use href="#layers"/></svg></span></div></section>
  <section class="pal p-sk2"><div class="ptitle"><span>基于草图的特征（压缩）</span><i></i></div><div class="pbar"><u></u>
    <span class="tool drop"><svg class="ic"><use href="#pad"/></svg></span>
    <span class="tool drop"><svg class="ic"><use href="#shaft"/></svg></span>
    <span class="tool"><svg class="ic"><use href="#hole"/></svg></span>
    <span class="tool drop"><svg class="ic"><use href="#rib"/></svg></span>
    <span class="tool drop"><svg class="ic"><use href="#multi"/></svg></span>
    <span class="tool drop"><svg class="ic"><use href="#loft"/></svg></span></div></section>
  <section class="pal p-sk"><div class="ptitle"><span>图的特征</span><i></i></div><div class="pbar"><u></u>
    <span class="tool drop"><svg class="ic"><use href="#lshape"/></svg></span>
    <span class="tool"><svg class="ic"><use href="#shaft"/></svg></span>
    <span class="tool"><svg class="ic"><use href="#groove"/></svg></span>
    <span class="tool"><svg class="ic"><use href="#hole"/></svg></span>
    <span class="tool"><svg class="ic"><use href="#rib"/></svg></span>
    <span class="tool"><svg class="ic"><use href="#sweep"/></svg></span>
    <span class="tool drop"><svg class="ic"><use href="#multi"/></svg></span>
    <span class="tool"><svg class="ic"><use href="#loft"/></svg></span>
    <span class="tool"><svg class="ic"><use href="#pocketS"/></svg></span></div></section>
  <section class="pal p-trans"><div class="ptitle"><span>变换</span><i></i></div><div class="pbar"><u></u>
    <span class="tool"><svg class="ic"><use href="#tmove"/></svg></span><span class="tool"><svg class="ic"><use href="#trot"/></svg></span><span class="tool"><svg class="ic"><use href="#tsym"/></svg></span><span class="tool"><svg class="ic"><use href="#taxis"/></svg></span></div></section>
  <section class="pal p-adv"><div class="ptitle"><i></i></div><div class="pbar"><u></u>
    <span class="tool"><svg class="ic"><use href="#blob"/></svg></span><span class="tool"><svg class="ic"><use href="#house"/></svg></span><span class="tool"><svg class="ic"><use href="#bow"/></svg></span><span class="tool"><svg class="ic"><use href="#curve3"/></svg></span></div></section>
  <section class="pal p-rem"><div class="ptitle"><span>移除/...</span><i></i></div><div class="pbar"><u></u>
    <span class="tool"><svg class="ic"><use href="#remove"/></svg></span><span class="tool"><svg class="ic"><use href="#up"/></svg></span></div></section>
  <section class="pal p-dress"><div class="ptitle"><span>修饰特征</span><i></i></div><div class="pbar"><u></u>
    <span class="tool drop"><svg class="ic"><use href="#fillet"/></svg></span><span class="tool"><svg class="ic"><use href="#chamf"/></svg></span><span class="tool drop"><svg class="ic"><use href="#draft"/></svg></span><span class="tool"><svg class="ic"><use href="#shell"/></svg></span><span class="tool"><svg class="ic"><use href="#thick"/></svg></span><span class="tool"><svg class="ic"><use href="#target"/></svg></span><span class="tool drop"><svg class="ic"><use href="#boxb"/></svg></span></div></section>
  <section class="pal p-draft"><div class="ptitle"><span>拔模</span><i></i></div><div class="pbar"><u></u>
    <span class="tool"><svg class="ic"><use href="#draft"/></svg></span><span class="tool"><svg class="ic"><use href="#draft2"/></svg></span><span class="tool"><svg class="ic"><use href="#draft3"/></svg></span></div></section>
  <section class="pal p-tf"><div class="ptitle"><span>变换特征</span><i></i></div><div class="pbar"><u></u>
    <span class="tool drop"><svg class="ic"><use href="#tmove"/></svg></span><span class="pdiv d1"></span>
    <span class="tool"><svg class="ic"><use href="#mirror"/></svg></span><span class="tool drop"><svg class="ic"><use href="#grid"/></svg></span><span class="pdiv d2"></span>
    <span class="tool drop"><svg class="ic"><use href="#scaleI"/></svg></span></div></section>
  <section class="pal p-scale"><div class="ptitle"><span>缩放</span><i></i></div><div class="pbar"><u></u>
    <span class="tool"><svg class="ic"><use href="#scaleI"/></svg></span><span class="tool"><svg class="ic"><use href="#scale2"/></svg></span></div></section>
  <section class="pal p-ref"><div class="ptitle"></div><div class="pbar">
    <span class="tool"><svg class="ic"><use href="#point"/></svg></span><span class="tool nar"><svg class="ic"><use href="#line"/></svg></span><span class="tool"><svg class="ic"><use href="#plane"/></svg></span></div></section>
  <section class="pal p-asm"><div class="ptitle"><span>件</span><i></i></div><div class="pbar"><u></u>
    <span class="tool"><svg class="ic"><use href="#asm1"/></svg></span><span class="tool drop"><svg class="ic"><use href="#asm2"/></svg></span><span class="tool"><svg class="ic"><use href="#asm3"/></svg></span><span class="pdiv d3"></span><span class="tool"><svg class="ic"><use href="#asm4"/></svg></span></div></section>

  <section class="dialog">
    <header class="dlg-head"><span class="dlg-title">点定义</span><span class="dlg-q">?</span><span class="dlg-x"></span></header>
    <div class="dlg-body">
      <div class="row r-type"><label class="l52">点类型：</label><span class="combo dlg-combo">曲线上<b></b></span><span class="okbtn"><svg class="ic18"><use href="#okg"/></svg></span></div>
      <div class="row r-curve"><label class="l42">曲线：</label><span class="field f151">凸台.1\边线</span></div>
      <div class="group"><span>与参考点的距离</span></div>
      <div class="radio dis"><span class="dot-r dis-on"></span>曲线上的距离</div>
      <div class="radio dis"><span class="dot-r"></span>沿着方向的距离</div>
      <div class="radio dis"><span class="dot-r"></span>曲线长度比率</div>
      <div class="row r-len"><label class="l43">长度：</label><span class="field f-len">1.554mm</span><span class="spin"><em></em><em class="dn"></em></span></div>
      <div class="row r-geo"><span class="dot-r"></span><span class="t-geo">测地距离</span><span class="dot-r on"></span><span class="t-line">直线距离</span></div>
      <div class="row r-btn"><span class="btn b84 dim">最近端点</span><span class="btn b60 dim">中点</span></div>
      <div class="group g2"><span>参考</span></div>
      <div class="row r-pt"><label class="l30">点：</label><span class="field f149">默认（端点）</span></div>
      <span class="btn b-rev">反转方向</span>
      <div class="row r-chk"><span class="check"></span>确定后重复对象</div>
      <div class="row r-act">
        <span class="btn b54"><span class="led g"></span>确定</span>
        <span class="btn b54"><span class="led r"></span>取消</span>
        <span class="btn b54">预览</span>
      </div>
    </div>
    <div class="earth"></div>
  </section>
  <svg class="cursor"><use href="#cursor"/></svg>

  <div class="timer">03:41</div>
  <div class="upload"><span class="up-logo"><svg class="ic20"><use href="#tlogo"/></svg></span><span class="up-text">拖拽上传</span></div>
</div>
</body>
</html>
```

FILE: styles.css
```css
*{box-sizing:border-box}
html,body{margin:0;padding:0}
body{width:1228px;height:768px;overflow:hidden;position:relative;display:flex;flex-direction:column;font-family:"Noto Sans CJK SC","Liberation Sans",sans-serif;font-size:12px;color:#222;background:#fff}
.sprite{position:absolute;width:0;height:0}
.ic{width:24px;height:24px;display:block}
.ic18{width:18px;height:18px;display:block}
.ic20{width:22px;height:22px;display:block}

.titlebar{height:23px;flex:none;background:#fff;display:flex;align-items:center;color:#8d8d8d;font-size:12px;font-family:"Open Sans","Noto Sans CJK SC",sans-serif}
.title-text{margin-left:-1px}
.win-btn{position:absolute}
.win-min{left:1176px;top:12px;width:11px;height:1px;background:#777}
.win-max{left:1222px;top:7px;width:11px;height:11px;border:1px solid #777}

.menubar{height:21px;flex:none;background:#c9c9e2;display:flex;align-items:center;color:#1c1c1c;font-size:12px;padding-bottom:3px}
.menu-item{margin-right:14.300px}
.brand{font-family:"Open Sans","Liberation Sans",sans-serif;font-size:13px;margin-left:-1px;margin-right:15px}

.topbar{height:36px;flex:none;display:flex;align-items:center;background:linear-gradient(#f6f6fb 0,#d5d5e9 24%,#cfcfe6 72%,#9a9ab2 93%,#6a6a80 100%);overflow:hidden}
.combo{position:relative;display:flex;align-items:center;height:24px;background:#fff;border:1px solid #b6b6c4;padding-left:5px;margin-right:4px;flex:none;color:#333;font-size:12px}
.combo b{position:absolute;right:6px;top:8px;width:6px;height:6px;border-right:1px solid #555;border-bottom:1px solid #555;transform:rotate(45deg)}
.w-first{width:15px;margin-left:0;margin-right:3px}
.w68{width:67px}
.w44{width:42px}
.w80{width:80px}
.none{width:68px}
.grey{background:#e3e3e3;width:68px}
.cut{display:block;width:20px;overflow:hidden;white-space:nowrap}
.off{background:#dcdcdc;color:#999;border-color:#dcdcdc}
.flat{background:#c9c9c9;color:#555;margin:0 0 0 3px}
.tool{width:28.300px;height:28px;flex:none;display:flex;align-items:center;justify-content:center;position:relative}
.first{margin-left:-2px}
.bump{margin-left:3px}
.sep{width:2px;height:19px;background:#f5f5fb;box-shadow:1px 0 0 #9a9ab2;flex:none}
.s11{margin:-4px 3px 0 10px}
.s9{margin:-4px 6px 0 9px}
.s8{margin:-4px 6px 0 8px}
.s10{margin:-4px 6px 0 10px}
.s10b{margin:-4px 7px 0 10px}
.s12{margin:-4px 6px 0 13px}
.dot{width:5px;height:5px;background:#1a2a7c;margin:4px 0 0 13px;flex:none}
.tool-curve{margin-left:8px;flex:none}

.drop::after{content:"";position:absolute;right:-3px;bottom:1px;border-left:4px solid transparent;border-right:4px solid transparent;border-top:5px solid #111}

.viewport{height:587px;flex:none;background:linear-gradient(#393868 0,#3e3d70 45%,#4c4b7b 62%,#7d7ca0 85%,#9999b5 100%)}

.bottombar{height:36px;flex:none;display:flex;align-items:center;padding-top:1px;background:linear-gradient(#f4f4fa 0,#d5d5e9 22%,#cfcfe6 70%,#9a9ab2 92%,#5f5f75 100%);overflow:hidden}
.lead{margin-left:-23px;width:28px}
.w30{width:30px}
.statusbar{height:25px;flex:none;background:#cdcde4;display:flex;align-items:center;justify-content:space-between;color:#222}
.status-text{margin-left:-1px;font-size:11.700px}
.status-input{width:298px;height:21px;background:#fff;border:1px solid #9a9aaa}

.taskbar{height:40px;flex:none;display:flex;background:#1f2d3f;color:#fff}
.search{width:324px;background:#f2f2f2;color:#333;display:flex;align-items:center;font-size:14px;padding-left:20px;position:relative}
.search-ring{position:absolute;left:-4px;top:13px;width:12px;height:12px;border:1.500px solid #222;border-radius:50%}
.task-icons{display:flex;align-items:center;height:40px}
.cortana{width:13px;height:13px;border:2px solid #f5f5f5;border-radius:50%;margin:0 13px 0 16px;flex:none;box-sizing:content-box}
.task{width:49px;height:40px;display:flex;align-items:center;justify-content:center;position:relative;flex:none}
.tv{margin-right:2px}
.on::after{content:"";position:absolute;left:4px;right:4px;bottom:0;height:2px;background:#8cc4ef}
.active{background:#3e4c5e}
.tray{margin-left:auto;display:flex;align-items:center;height:40px;color:#eee}
.caret{width:8px;height:8px;border-left:1.500px solid #ddd;border-top:1.500px solid #ddd;transform:rotate(45deg);margin:5px 10px 0 0}
.tray-ic{width:17px;height:17px;margin-right:7px;flex:none}
.ime{font-size:13px;margin:0 14px 0 0}
.clock{display:flex;flex-direction:column;width:48px;white-space:nowrap;font-family:"Open Sans","Liberation Sans",sans-serif;font-size:11.500px;line-height:19px;align-items:flex-start;overflow:hidden}
.clock span:first-child{margin-left:13px}

.canvas{position:absolute;left:0;top:0;width:1228px;height:768px;pointer-events:none;overflow:hidden}
.scene{position:absolute;left:0;top:0;width:1228px;height:768px}
.scene-green{font:13.500px "Liberation Sans",sans-serif;fill:#58d070}
.scene-red{font:12px "Noto Sans CJK SC",sans-serif;fill:#e03040}
.scene-axis{font:11px "Liberation Sans",sans-serif;fill:#fff}

.node{position:absolute;left:0;color:#fff;font-size:17px;line-height:24px;background:#37355f;padding-right:3px;white-space:nowrap;font-family:"Liberation Sans","Noto Sans CJK SC",sans-serif}
.n1{top:151px;margin-left:-6px}
.n2{top:189px;margin-left:-1px}
.n3{top:226px;margin-left:-1px}
.n4{top:264px;margin-left:-1px}
.n5{top:302px;background:#1c7fe2;color:#d8f8ff;border-radius:0 4px 4px 0;width:85px}
.n6{top:340px}
.n7{top:378px;left:24px;padding:0 2px}
.node-bullet{position:absolute;left:2px;top:385px;width:7px;height:7px;background:#10246c;box-shadow:1px 1px 0 #7fb0e8}

.pal{position:absolute;box-shadow:2px 2px 4px rgba(15,15,40,.45);background:#cfcfe6;display:flex;flex-direction:column;--ind:6px}
.ptitle{height:32px;flex:none;background:#fff;display:flex;align-items:center;justify-content:space-between;color:#9b9b9b;font-size:12px;white-space:nowrap;padding-left:8px;padding-bottom:4px;overflow:hidden}
.ptitle i{width:19px;height:19px;background:#e6e6e6;flex:none;margin:0 0 0 auto;position:relative;right:1px;top:3px}
.pbar{flex:1;display:flex;align-items:center;background:linear-gradient(#fff 0,#d4d4ea 22%,#cfcfe6 72%,#a4a4bb 94%,#84849a 100%);position:relative;padding-top:1px}
.pbar>u{width:2px;height:18px;background:#f4f4fb;box-shadow:1px 0 0 #8f8fa8;margin-left:5px;margin-right:var(--ind);flex:none;text-decoration:none;margin-top:-10px}
.pbar-h s{position:absolute;left:3px;top:4px;width:16px;height:2px;background:#f4f4fb;box-shadow:0 1px 0 #8f8fa8}
.pdiv{width:1px;height:100%;background:#f5f5fb;flex:none;position:relative}
.d1{margin:0 4px 0 4px}
.d2{margin:0 4px 0 2px}
.d3{margin:0 4px 0 0}
.nar{width:24px}

.p-tools{left:680px;top:88px;width:420px;height:65px}
.p-tools .pbar{padding-right:2px}
.body-combo{width:177px;height:25px;background:#dcdcdc;border-color:#cfcfcf;margin:0;color:#222}
.num-ic{font:700 9.500px/9.500px "Liberation Sans",sans-serif;color:#111;text-align:center}
.p-cam{left:94px;top:181px;width:43px;height:63px}
.p-cam .ptitle span{width:14px;overflow:hidden}
.p-meas{left:165px;top:289px;width:99px;height:63px;--ind:5px}
.p-app{left:713px;top:176px;width:43px;height:63px}
.p-array{left:727px;top:332px;width:40px;height:63px}
.p-array .tool{margin-left:-1px}
.p-eng{left:948px;top:211px;width:114px;height:63px;--ind:18px}
.p-eng .ptitle{padding-left:43px}
.p-know{left:948px;top:291px;width:101px;height:64px;--ind:34px}
.p-know .ptitle{padding-left:31px}
.p-stack1{left:1093px;top:358px;width:34px;height:100px}
.p-stack2{left:1092px;top:368px;width:36px;height:100px}
.p-stack2 .ptitle{padding-left:3px}
.stack-foot{align-items:flex-end;justify-content:flex-start;background:linear-gradient(#cfcfe6 0,#e5e5ef 100%)}
.ic-foot{width:26px;height:24px;display:block;margin:0 0 0 7px}
.p-rel{left:948px;top:390px;width:169px;height:65px;--ind:17px}
.p-asm3{left:948px;top:492px;width:80px;height:63px;--ind:15px}
.p-wire{left:1054px;top:478px;width:36px;height:74px}
.p-wire .pbar{background:linear-gradient(#cfcfe6 0,#eeeef6 60%,#fff 100%)}
.p-wire .tool{margin-left:8px;margin-top:28px;width:28px}
.p-analysis{left:1062px;top:470px;width:127px;height:63px;--ind:5px}
.p-analysis .tool{width:28.500px}

.p-surf{left:-42px;top:414px;width:133px;height:63px;--ind:37px}
.p-surf .tool{width:29.500px}
.p-surf .ptitle{padding-left:38px}
.p-base{left:109px;top:410px;width:36px;height:73px}
.p-base .ptitle{height:30px}
.p-base .ptitle span{width:6px;overflow:hidden}
.p-base .tool{margin-left:4px;margin-top:12px}
.p-sk2{left:164px;top:415px;width:195px;height:66px;--ind:6px}
.p-sk2 .tool{width:29.600px}
.p-sk2 .ptitle{padding-left:10px}
.p-sk{left:-40px;top:488px;width:296px;height:65px;--ind:31px}
.p-sk .ptitle{padding-left:40px}
.p-trans{left:279px;top:488px;width:127px;height:63px;--ind:5px}
.p-adv{left:-20px;top:559px;width:137px;height:63px;--ind:16px}
.p-rem{left:132px;top:558px;width:71px;height:63px}
.p-dress{left:225px;top:567px;width:217px;height:65px;--ind:8px}
.p-dress .ptitle{padding-left:9px}
.p-draft{left:454px;top:571px;width:99px;height:63px;--ind:6px}
.p-tf{left:559px;top:587px;width:149px;height:65px;--ind:7px}
.p-scale{left:737px;top:585px;width:71px;height:63px;--ind:6px}
.p-ref{left:829px;top:565px;width:111px;height:65px}
.p-ref .pbar{padding-left:16px}
.p-asm{left:940px;top:564px;width:145px;height:65px;--ind:3px}
.p-asm .ptitle{padding-left:44px}
.p-asm .tool{width:33px}
.p-asm .d3{margin:0 2px 0 0}

.dialog{position:absolute;left:756px;top:190px;width:234px;height:409px;background:#fff;box-shadow:1px 1px 3px rgba(0,0,0,.5);overflow:hidden}
.dlg-head{height:29px;display:flex;align-items:center;padding-left:8px;position:relative;color:#333}
.dlg-q{position:absolute;left:162px;top:5px;font-size:13px;color:#333}
.dlg-x{position:absolute;left:205px;top:8px;width:12px;height:12px;background:linear-gradient(45deg,transparent 46%,#222 46%,#222 54%,transparent 54%),linear-gradient(-45deg,transparent 46%,#222 46%,#222 54%,transparent 54%)}
.dlg-body{height:380px;padding:10px 8px 0 9px;background:linear-gradient(#f4e9db 0,#f8e6d0 45%,#fbdfbc 100%);color:#333}
.row{display:flex;align-items:center}
.row label{flex:none}
.l52{width:52px}
.l42{width:42px}
.l43{width:43px}
.l30{width:30px}
.r-type{height:24px}
.dlg-combo{width:140px;height:24px;margin:0;background:#e0e0e0;border:1px solid #b0b0b0}
.okbtn{width:25px;height:24px;background:#e8e8e8;border:1px solid #f7f7f7;border-right-color:#888;border-bottom-color:#888;display:flex;align-items:center;justify-content:center;margin-left:1px}
.r-curve{margin-top:4px;height:20px}
.field{height:100%;background:#fff;border:1px solid #a8a8a8;padding-left:5px;display:flex;align-items:center;color:#333}
.f151{width:151px}
.f149{width:149px}
.group{height:16px;margin-top:4px;margin-bottom:3px;position:relative;display:flex;align-items:center;color:#333}
.group::after{content:"";position:absolute;left:60px;right:3px;top:8px;height:1px;background:#bdb6a8}
.g2{margin-top:3px;margin-bottom:0}
.g2::after{left:24px}
.group span{margin-left:1px}
.radio{height:25px;display:flex;align-items:center;padding-left:15px;color:#b2a99a}
.dot-r{width:11px;height:11px;border:1px solid #555;border-radius:50%;background:#fbf0de;margin-right:6px;flex:none}
.dis .dot-r{border-color:#777}
.dot-r.dis-on{background:radial-gradient(circle at 40% 40%,#c6c6dc,#7f7fa0);border-color:#aaa}
.dot-r.on{background:radial-gradient(circle at 40% 40%,#7fa5d8,#12285c);border-color:#888}
.r-len{height:20px;margin-top:10px;padding-left:15px}
.f-len{width:125px;padding-left:3px;border-color:#666 #ddd #ddd #666;border-width:2px 1px 1px 2px;font-family:"Open Sans","Liberation Sans",sans-serif;font-size:12px;color:#222}
.spin{width:20px;height:20px;display:flex;flex-direction:column;background:#888;padding:2px}
.spin em{flex:1;background:#e8e8ee;position:relative;display:block}
.spin em::after{content:"";position:absolute;left:4px;top:2px;border-left:4px solid transparent;border-right:4px solid transparent;border-bottom:4px solid #111}
.spin em.dn{margin-top:1px}
.spin em.dn::after{border-bottom:none;border-top:4px solid #111}
.r-geo{height:20px;margin-top:10px;padding-left:15px;color:#111;-webkit-text-stroke:.25px #111}
.t-geo{margin-right:7px;color:#4a1515}
.r-btn{height:21px;margin-top:6px;padding-left:15px;gap:2px}
.btn{display:flex;align-items:center;justify-content:center;background:#cfcfe6;border:1px solid #f3f3fb;border-right:2px solid #6e6e80;border-bottom:2px solid #6e6e80;color:#333;flex:none}
.b84{width:84px;height:21px}
.b60{width:60px;height:21px}
.dim{color:#a5a5b8}
.r-pt{height:20px;margin-top:6px;padding-left:13px}
.b-rev{width:200px;height:21px;margin:4px 0 0 14px}
.r-chk{height:12px;margin-top:9px;margin-left:1px}
.check{width:12px;height:12px;border:1px solid #444;background:#fbf3df;margin-right:4px;flex:none}
.r-act{margin-top:14px;margin-left:41px;height:22px;gap:7px}
.b54{width:54px;height:22px;gap:3px}
.led{width:12px;height:12px;border-radius:50%;flex:none}
.led.g{background:radial-gradient(circle at 40% 35%,#8fe28f,#0f8a2a 70%)}
.led.r{background:radial-gradient(circle at 40% 35%,#f3a0a0,#b01c1c 70%)}
.earth{position:absolute;left:0;bottom:0;width:44px;height:26px;background:radial-gradient(ellipse 34px 22px at 14px 28px,#4c6e86 0,#7e9cae 60%,#e8b060 78%,rgba(251,220,181,0) 100%)}

.cursor{position:absolute;left:827px;top:454px;width:14px;height:20px}

.timer{position:absolute;left:1104px;top:202px;width:52px;height:52px;border-radius:50%;background:linear-gradient(#3f9ae8,#4aaef2);border:3px solid #e2f3fb;color:#cdeeff;display:flex;align-items:center;justify-content:center;font-family:"Open Sans","Liberation Sans",sans-serif;font-size:14px}
.upload{position:absolute;left:1087px;top:28px;width:103px;height:25px;display:flex;border:1px solid #3f93e0;border-radius:4px;overflow:hidden;box-shadow:0 0 0 1px #e6f2fc}
.up-logo{width:30px;background:#2f8bf0;display:flex;align-items:center;justify-content:center}
.up-text{flex:1;background:#c9edfb;color:#6cb4c8;display:flex;align-items:center;justify-content:center;font-size:12px}
```
